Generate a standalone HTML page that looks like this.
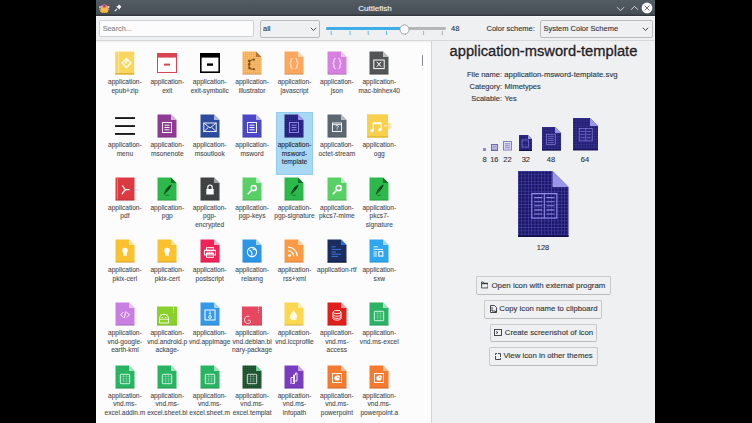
<!DOCTYPE html>
<html><head><meta charset="utf-8"><style>
*{margin:0;padding:0;box-sizing:border-box}
html,body{width:752px;height:423px;overflow:hidden;background:#000;font-family:"Liberation Sans", sans-serif;}
.abs{position:absolute;display:block}
.input{position:absolute;background:#fcfcfc;border:1px solid #c8cacc;border-radius:2px}
.combo{position:absolute;background:#eff0f1;border:1px solid #b9bbbd;border-radius:2px}
.lbl{position:absolute;font-size:7.5px;color:#31363b;line-height:10px;white-space:nowrap;-webkit-text-stroke:0.12px currentColor}
.cell{position:absolute;width:42.4px;height:62px;text-align:center}
.ic{position:absolute;left:9.2px;top:0;width:24px;height:24px}
.ic svg{display:block}
.lab{position:absolute;left:-6px;width:54.4px;top:27.0px;font-size:6.6px;line-height:8.75px;color:#464b50;white-space:nowrap;-webkit-text-stroke:0.08px currentColor}
.sel .lab{color:#1d2125}
.btn{position:absolute;height:18px;background:#eff0f1;border:1px solid #c6c8ca;border-bottom-color:#b9bbbd;border-radius:2px}
</style></head><body>
<div class="abs" style="left:96px;top:0;width:559px;height:423px;background:#eff0f1"></div>
<!-- titlebar -->
<div class="abs" style="left:96px;top:0;width:559px;height:16px;background:linear-gradient(#545c63,#475056 85%,#2c3237)"></div>
<div class="abs" style="left:96px;top:16px;width:559px;height:1px;background:#f7f8f8"></div>
<div class="lbl" style="left:300px;width:150px;text-align:center;top:3.6px;font-size:8px;line-height:10px;color:#f4f5f6">Cuttlefish</div>
<svg class="abs" style="left:99px;top:2.5px" width="10.5" height="10.5" viewBox="0 0 10.5 10.5"><circle cx="1" cy="4" r="0.9" fill="#e6dcf5"/><circle cx="0.9" cy="6.2" r="0.8" fill="#b9a2e6"/><circle cx="9.5" cy="4" r="0.9" fill="#f3eefa"/><circle cx="9.6" cy="6.2" r="0.8" fill="#c9b2ee"/><path d="M1.8 4.2C1.8 1 8.7 1 8.7 4.2L9.3 8.6C8.9 9.6 8 9.2 7.4 10c-0.6-0.7-1.3-0.7-2.1 0-0.8-0.7-1.5-0.7-2.1 0C2.6 9.2 1.6 9.6 1.2 8.6Z" fill="#fbb83a"/><path d="M3 2.2C4 0.8 6.6 0.8 7.4 2.2 7 3.8 6 4.8 5 5.3 4 4.6 3.3 3.6 3 2.2Z" fill="#d25aa8" opacity="0.9"/><circle cx="5.4" cy="3" r="1.1" fill="#b0308a"/></svg>
<svg class="abs" style="left:113.5px;top:4px" width="8" height="8" viewBox="0 0 8 8"><path d="M4.6 0.9C5.3 0.2 7.8 2.7 7.1 3.4L5.9 4.3 5.6 5.8 2.2 2.4 3.7 2.1Z" fill="#f2f3f4"/><path d="M3.2 4.8L0.8 7.2" stroke="#e6e8ea" stroke-width="1.2"/></svg>
<svg class="abs" style="left:616px;top:5.6px" width="9" height="6" viewBox="0 0 9 6"><path d="M1 1.2l3.5 3.5 3.5-3.5" fill="none" stroke="#d5d8da" stroke-width="1"/></svg>
<svg class="abs" style="left:629.5px;top:4.6px" width="9" height="6" viewBox="0 0 9 6"><path d="M1 4.8l3.5-3.5 3.5 3.5" fill="none" stroke="#d5d8da" stroke-width="1"/></svg>
<svg class="abs" style="left:641px;top:2.2px" width="12" height="12" viewBox="0 0 12 12"><circle cx="6" cy="6" r="5.4" fill="#fcfcfc"/><path d="M3.7 3.7l4.6 4.6M8.3 3.7l-4.6 4.6" stroke="#475057" stroke-width="0.8"/></svg>

<!-- toolbar -->
<div class="input" style="left:99px;top:20px;width:155px;height:17px;border-color:#d0d2d4"></div>
<div class="lbl" style="left:102.7px;top:24.2px;color:#85898d;font-size:7.3px">Search...</div>
<div class="combo" style="left:260px;top:20px;width:60px;height:17.5px"></div>
<div class="lbl" style="left:263px;top:24px">all</div>
<svg class="abs" style="left:310px;top:26.5px" width="7" height="5" viewBox="0 0 7 5"><path d="M0.8 0.8l2.7 2.7 2.7-2.7" fill="none" stroke="#31363b" stroke-width="0.9"/></svg>
<div class="abs" style="left:326px;top:26.8px;width:120px;height:3px;border-radius:1.5px;background:#b4b6b8"></div>
<div class="abs" style="left:326px;top:26.8px;width:79px;height:3px;border-radius:1.5px;background:#3daee9"></div>
<svg class="abs" style="left:326.7px;top:30px" width="120" height="6" viewBox="0 0 120 6"><g stroke-width="0.8"><path d="M4.2 1v4M23.1 1v4M41.2 1v4M59.5 1v4M78.5 1v4" stroke="#3daee9"/><path d="M96.6 1v4M115.3 1v4" stroke="#9a9ea2"/></g></svg>
<svg class="abs" style="left:399px;top:23.5px" width="11" height="11" viewBox="0 0 11 11"><circle cx="5.5" cy="5.5" r="4.6" fill="#fcfcfc" stroke="#989b9e" stroke-width="0.9"/></svg>
<div class="lbl" style="left:451px;top:24px">48</div>
<div class="lbl" style="left:486.5px;top:24px">Color scheme:</div>
<div class="combo" style="left:540px;top:20px;width:112.5px;height:17.5px"></div>
<div class="lbl" style="left:543.5px;top:24px">System Color Scheme</div>
<svg class="abs" style="left:642px;top:26.5px" width="7" height="5" viewBox="0 0 7 5"><path d="M0.8 0.8l2.7 2.7 2.7-2.7" fill="none" stroke="#31363b" stroke-width="0.9"/></svg>
<div class="abs" style="left:96px;top:40px;width:559px;height:1px;background:#d6d8da"></div>

<!-- left pane -->
<div class="abs" style="left:96px;top:41px;width:335px;height:382px;background:#fcfcfc"></div>
<div class="abs" style="left:96px;top:41px;width:335px;height:2px;background:linear-gradient(rgba(0,0,0,0.05),rgba(0,0,0,0))"></div>
<div class="abs" style="left:275.5px;top:112.3px;width:37.4px;height:62.4px;background:#a8d8f4;border:1px solid #93ccef"></div>
<div class="cell" style="left:103.70px;top:51.10px"><div class="ic"><svg width="24" height="24" viewBox="0 0 24 24"><rect x="2.2" y="0.6" width="19" height="22.9" fill="#f9d65e"/><rect x="2.2" y="22.3" width="19" height="1.2" fill="#d8a52a"/><rect x="5.2" y="0.6" width="0.8" height="21.7" fill="#fbe9a6"/><path d="M15.3 9.3L13.5 7.5 9 12l4.5 4.5 4.5-4.5-3-3-2.6 2.6 1.1 1.1" fill="none" stroke="#fff" stroke-width="1.25"/></svg></div><div class="lab">application-<br>epub+zip</div></div><div class="cell" style="left:146.10px;top:51.10px"><div class="ic"><svg width="24" height="24" viewBox="0 0 24 24"><rect x="2.5" y="2.5" width="19" height="19" fill="#fff" stroke="#da4453"/><rect x="2" y="2" width="20" height="4.6" fill="#da4453"/><rect x="9" y="12.6" width="6" height="2" fill="#da4453"/></svg></div><div class="lab">application-<br>exit</div></div><div class="cell" style="left:188.50px;top:51.10px"><div class="ic"><svg width="24" height="24" viewBox="0 0 24 24"><rect x="2.8" y="2.8" width="18.4" height="18.4" fill="#fff" stroke="#000" stroke-width="1.6"/><rect x="2" y="2" width="20" height="4.6" fill="#000"/><rect x="9" y="12.4" width="6" height="2.4" fill="#000"/></svg></div><div class="lab">application-<br>exit-symbolic</div></div><div class="cell" style="left:230.90px;top:51.10px"><div class="ic"><svg width="24" height="24" viewBox="0 0 24 24"><defs><pattern id="ptil" width="2" height="2" patternUnits="userSpaceOnUse"><rect width="2" height="2" fill="#f8a947"/><path d="M0 0.25H2M0.25 0V2" stroke="#fbc98a" stroke-width="0.5"/></pattern></defs><path d="M2.5 0.5H16L21.5 6V23.5H2.5Z" fill="url(#ptil)"/><path d="M16 0.5L21.5 6H16Z" fill="#b07a3c"/><rect x="2.5" y="22.6" width="19" height="0.9" fill="rgba(0,0,0,0.18)"/><path d="M14 8.6C11 8.6 9.5 9.5 9.2 12.5S9 16 9.5 17.2 11.5 18 14 18.2" fill="none" stroke="#7a4a16" stroke-width="1"/><g fill="#7a4a16"><rect x="8.2" y="8.8" width="2.2" height="2.2"/><rect x="8.2" y="12.2" width="2.2" height="2.4"/><rect x="8.4" y="16" width="2.2" height="2.2"/><rect x="13" y="7.7" width="1.8" height="1.8"/><rect x="13" y="17.3" width="1.8" height="1.8"/></g></svg></div><div class="lab">application-<br>illustrator</div></div><div class="cell" style="left:273.30px;top:51.10px"><div class="ic"><svg width="24" height="24" viewBox="0 0 24 24"><path d="M2.5 0.5H16L21.5 6V23.5H2.5Z" fill="#fca65e"/><path d="M16 0.5L21.5 6H16Z" fill="#fdd8b6"/><rect x="2.5" y="22.6" width="19" height="0.9" fill="rgba(0,0,0,0.18)"/><path d="M10.5 7.5c-1.5 0-1.5 1-1.5 2.5s-0.3 2-1.3 2.5c1 0.5 1.3 1 1.3 2.5s0 2.5 1.5 2.5M13.5 7.5c1.5 0 1.5 1 1.5 2.5s0.3 2 1.3 2.5c-1 0.5-1.3 1-1.3 2.5s0 2.5-1.5 2.5" fill="none" stroke="#fff" stroke-width="0.9"/></svg></div><div class="lab">application-<br>javascript</div></div><div class="cell" style="left:315.70px;top:51.10px"><div class="ic"><svg width="24" height="24" viewBox="0 0 24 24"><path d="M2.5 0.5H16L21.5 6V23.5H2.5Z" fill="#d680df"/><path d="M16 0.5L21.5 6H16Z" fill="#efc6f3"/><rect x="2.5" y="22.6" width="19" height="0.9" fill="rgba(0,0,0,0.18)"/><path d="M10.5 7.5c-1.5 0-1.5 1-1.5 2.5s-0.3 2-1.3 2.5c1 0.5 1.3 1 1.3 2.5s0 2.5 1.5 2.5M13.5 7.5c1.5 0 1.5 1 1.5 2.5s0.3 2 1.3 2.5c-1 0.5-1.3 1-1.3 2.5s0 2.5-1.5 2.5" fill="none" stroke="#fff" stroke-width="0.9"/></svg></div><div class="lab">application-<br>json</div></div><div class="cell" style="left:358.10px;top:51.10px"><div class="ic"><svg width="24" height="24" viewBox="0 0 24 24"><path d="M2.5 0.5H16L21.5 6V23.5H2.5Z" fill="#535556"/><path d="M16 0.5L21.5 6H16Z" fill="#bfc1c2"/><rect x="2.5" y="22.6" width="19" height="0.9" fill="rgba(0,0,0,0.18)"/><rect x="6.8" y="9" width="10.4" height="8.6" fill="none" stroke="#fff" stroke-width="1"/><path d="M9.8 10.8l4.4 5M14.2 10.8l-4.4 5" stroke="#fff" stroke-width="1"/></svg></div><div class="lab">application-<br>mac-binhex40</div></div><div class="cell" style="left:103.70px;top:113.80px"><div class="ic"><svg width="24" height="24" viewBox="0 0 24 24"><rect x="2" y="3.2" width="20" height="1.7" fill="#000"/><rect x="2" y="11.2" width="20" height="1.7" fill="#000"/><rect x="2" y="19.1" width="20" height="1.7" fill="#000"/></svg></div><div class="lab">application-<br>menu</div></div><div class="cell" style="left:146.10px;top:113.80px"><div class="ic"><svg width="24" height="24" viewBox="0 0 24 24"><path d="M2.5 0.5H16L21.5 6V23.5H2.5Z" fill="#8f3a95"/><path d="M16 0.5L21.5 6H16Z" fill="#d9b3dc"/><rect x="2.5" y="22.6" width="19" height="0.9" fill="rgba(0,0,0,0.18)"/><g fill="none" stroke="#ffffff" stroke-width="1" opacity="0.95"><rect x="7.5" y="8.5" width="9" height="10"/><path d="M9.5 11.2h5M9.5 13.5h5M9.5 15.8h5"/></g></svg></div><div class="lab">application-<br>msonenote</div></div><div class="cell" style="left:188.50px;top:113.80px"><div class="ic"><svg width="24" height="24" viewBox="0 0 24 24"><path d="M2.5 0.5H16L21.5 6V23.5H2.5Z" fill="#2d4c9f"/><path d="M16 0.5L21.5 6H16Z" fill="#aab8de"/><rect x="2.5" y="22.6" width="19" height="0.9" fill="rgba(0,0,0,0.18)"/><g fill="none" stroke="#fff" stroke-width="0.9"><rect x="5.8" y="9" width="12.4" height="8.6"/><path d="M5.8 9l6.2 5 6.2-5M5.8 17.6l4.5-4.2M18.2 17.6l-4.5-4.2"/></g></svg></div><div class="lab">application-<br>msoutlook</div></div><div class="cell" style="left:230.90px;top:113.80px"><div class="ic"><svg width="24" height="24" viewBox="0 0 24 24"><path d="M2.5 0.5H16L21.5 6V23.5H2.5Z" fill="#4b47c8"/><path d="M16 0.5L21.5 6H16Z" fill="#b5b3ed"/><rect x="2.5" y="22.6" width="19" height="0.9" fill="rgba(0,0,0,0.18)"/><g fill="none" stroke="#ffffff" stroke-width="1" opacity="0.95"><rect x="7.5" y="8.5" width="9" height="10"/><path d="M9.5 11.2h5M9.5 13.5h5M9.5 15.8h5"/></g></svg></div><div class="lab">application-<br>msword</div></div><div class="cell sel" style="left:273.30px;top:113.80px"><div class="ic"><svg width="24" height="24" viewBox="0 0 24 24"><defs><pattern id="pttp" width="2" height="2" patternUnits="userSpaceOnUse"><rect width="2" height="2" fill="#221c74"/><path d="M0 0.25H2M0.25 0V2" stroke="#3b36a2" stroke-width="0.5"/></pattern></defs><path d="M2.5 0.5H16L21.5 6V23.5H2.5Z" fill="url(#pttp)"/><path d="M16 0.5L21.5 6H16Z" fill="#9692ea"/><rect x="2.5" y="22.6" width="19" height="0.9" fill="rgba(0,0,0,0.18)"/><g fill="none" stroke="#8f8be6" stroke-width="1" opacity="0.95"><rect x="7.5" y="8.5" width="9" height="10"/><path d="M9.5 11.2h5M9.5 13.5h5M9.5 15.8h5"/></g></svg></div><div class="lab">application-<br>msword-<br>template</div></div><div class="cell" style="left:315.70px;top:113.80px"><div class="ic"><svg width="24" height="24" viewBox="0 0 24 24"><path d="M2.5 0.5H16L21.5 6V23.5H2.5Z" fill="#5c6772"/><path d="M16 0.5L21.5 6H16Z" fill="#b7bdc3"/><rect x="2.5" y="22.6" width="19" height="0.9" fill="rgba(0,0,0,0.18)"/><rect x="7.5" y="9" width="9" height="8.5" fill="none" stroke="#fff" stroke-width="0.9"/><path d="M7.5 10.6h9" stroke="#fff" stroke-width="0.9"/><path d="M10.8 12.5c0-1.2 2.6-1.2 2.6 0s-1.3 0.9-1.3 2M12.1 15.4v0.9" fill="none" stroke="#fff" stroke-width="0.8"/></svg></div><div class="lab">application-<br>octet-stream</div></div><div class="cell" style="left:358.10px;top:113.80px"><div class="ic"><svg width="24" height="24" viewBox="0 0 24 24" style="overflow:visible"><circle cx="21" cy="12" r="3.6" fill="#f8e7a8"/><rect x="0" y="0.3" width="21" height="23.2" fill="#f8d04c"/><rect x="0" y="22.4" width="21" height="1.1" fill="#d9ae2e"/><path d="M6.2 16.9V9.3H14.2V15.9" fill="none" stroke="#fff" stroke-width="1.1"/><path d="M6.2 9.3H14.2" stroke="#fff" stroke-width="1.8"/><circle cx="5" cy="16.8" r="1.7" fill="#fff"/><circle cx="13" cy="15.8" r="1.7" fill="#fff"/><path d="M17 11.8h3" stroke="#fff" stroke-width="1.1" opacity="0.9"/></svg></div><div class="lab">application-<br>ogg</div></div><div class="cell" style="left:103.70px;top:176.50px"><div class="ic"><svg width="24" height="24" viewBox="0 0 24 24"><rect x="2.5" y="0.5" width="19" height="23" fill="#dc3a40"/><rect x="2.5" y="22.6" width="19" height="0.9" fill="rgba(0,0,0,0.2)"/><rect x="4.2" y="0.5" width="0.7" height="22" fill="#f09498"/><path d="M9.5 8.5c1 2 1.5 3 3 4.2M12.5 12.7h4M12.5 12.7c-1.5 1-2.5 2.5-3.5 4.5" fill="none" stroke="#fff" stroke-width="1.3"/></svg></div><div class="lab">application-<br>pdf</div></div><div class="cell" style="left:146.10px;top:176.50px"><div class="ic"><svg width="24" height="24" viewBox="0 0 24 24"><path d="M2.5 0.5H16L21.5 6V23.5H2.5Z" fill="#2db84b"/><path d="M16 0.5L21.5 6H16Z" fill="#1b6d2d"/><rect x="2.5" y="22.6" width="19" height="0.9" fill="rgba(0,0,0,0.18)"/><path d="M16.5 7.5c-3 1-6 4.5-7.8 9.5l0.9 0.5c2-2.5 3.5-3.5 5-5.5 1.2-1.6 1.9-3.2 1.9-4.5z" fill="#0d3f18"/><path d="M9 17.2l3.5-5" stroke="#2db84b" stroke-width="0.4"/><path d="M10.5 18.6c0.6-0.8 1.1 0.3 1.7-0.3s0.8 0.6 1.6 0.1" fill="none" stroke="#0d3f18" stroke-width="0.6"/></svg></div><div class="lab">application-<br>pgp</div></div><div class="cell" style="left:188.50px;top:176.50px"><div class="ic"><svg width="24" height="24" viewBox="0 0 24 24"><defs><pattern id="ptlk" width="2" height="2" patternUnits="userSpaceOnUse"><rect width="2" height="2" fill="#3d3e3f"/><path d="M0 0.25H2M0.25 0V2" stroke="#4a4b4c" stroke-width="0.5"/></pattern></defs><path d="M2.5 0.5H16L21.5 6V23.5H2.5Z" fill="url(#ptlk)"/><path d="M16 0.5L21.5 6H16Z" fill="#a3a5a6"/><rect x="2.5" y="22.6" width="19" height="0.9" fill="rgba(0,0,0,0.18)"/><rect x="8.3" y="12" width="7.4" height="5.5" fill="#fff"/><path d="M9.8 12v-1.8a2.2 2.2 0 0 1 4.4 0V12" fill="none" stroke="#fff" stroke-width="1.2"/></svg></div><div class="lab">application-<br>pgp-<br>encrypted</div></div><div class="cell" style="left:230.90px;top:176.50px"><div class="ic"><svg width="24" height="24" viewBox="0 0 24 24"><path d="M2.5 0.5H16L21.5 6V23.5H2.5Z" fill="#58d066"/><path d="M16 0.5L21.5 6H16Z" fill="#b6eebd"/><rect x="2.5" y="22.6" width="19" height="0.9" fill="rgba(0,0,0,0.18)"/><circle cx="13.8" cy="11" r="2.6" fill="none" stroke="#fff" stroke-width="1.5"/><path d="M12 12.8l-4.2 4.4" stroke="#fff" stroke-width="1.6"/></svg></div><div class="lab">application-<br>pgp-keys</div></div><div class="cell" style="left:273.30px;top:176.50px"><div class="ic"><svg width="24" height="24" viewBox="0 0 24 24"><path d="M2.5 0.5H16L21.5 6V23.5H2.5Z" fill="#2db84b"/><path d="M16 0.5L21.5 6H16Z" fill="#1b6d2d"/><rect x="2.5" y="22.6" width="19" height="0.9" fill="rgba(0,0,0,0.18)"/><path d="M16.5 7.5c-3 1-6 4.5-7.8 9.5l0.9 0.5c2-2.5 3.5-3.5 5-5.5 1.2-1.6 1.9-3.2 1.9-4.5z" fill="#0d3f18"/><path d="M9 17.2l3.5-5" stroke="#2db84b" stroke-width="0.4"/><path d="M10.5 18.6c0.6-0.8 1.1 0.3 1.7-0.3s0.8 0.6 1.6 0.1" fill="none" stroke="#0d3f18" stroke-width="0.6"/></svg></div><div class="lab">application-<br>pgp-signature</div></div><div class="cell" style="left:315.70px;top:176.50px"><div class="ic"><svg width="24" height="24" viewBox="0 0 24 24"><path d="M2.5 0.5H16L21.5 6V23.5H2.5Z" fill="#58d066"/><path d="M16 0.5L21.5 6H16Z" fill="#b6eebd"/><rect x="2.5" y="22.6" width="19" height="0.9" fill="rgba(0,0,0,0.18)"/><circle cx="13.8" cy="11" r="2.6" fill="none" stroke="#fff" stroke-width="1.5"/><path d="M12 12.8l-4.2 4.4" stroke="#fff" stroke-width="1.6"/></svg></div><div class="lab">application-<br>pkcs7-mime</div></div><div class="cell" style="left:358.10px;top:176.50px"><div class="ic"><svg width="24" height="24" viewBox="0 0 24 24"><path d="M2.5 0.5H16L21.5 6V23.5H2.5Z" fill="#2db84b"/><path d="M16 0.5L21.5 6H16Z" fill="#1b6d2d"/><rect x="2.5" y="22.6" width="19" height="0.9" fill="rgba(0,0,0,0.18)"/><path d="M16.5 7.5c-3 1-6 4.5-7.8 9.5l0.9 0.5c2-2.5 3.5-3.5 5-5.5 1.2-1.6 1.9-3.2 1.9-4.5z" fill="#0d3f18"/><path d="M9 17.2l3.5-5" stroke="#2db84b" stroke-width="0.4"/><path d="M10.5 18.6c0.6-0.8 1.1 0.3 1.7-0.3s0.8 0.6 1.6 0.1" fill="none" stroke="#0d3f18" stroke-width="0.6"/></svg></div><div class="lab">application-<br>pkcs7-<br>signature</div></div><div class="cell" style="left:103.70px;top:239.20px"><div class="ic"><svg width="24" height="24" viewBox="0 0 24 24"><path d="M2.5 0.5H16L21.5 6V23.5H2.5Z" fill="#fcc12f"/><path d="M16 0.5L21.5 6H16Z" fill="#fde7a4"/><rect x="2.5" y="22.6" width="19" height="0.9" fill="rgba(0,0,0,0.18)"/><circle cx="12" cy="11.5" r="2.8" fill="#fff"/><path d="M10.3 13v4.5l1.7-1.2 1.7 1.2v-4.5" fill="#fff"/></svg></div><div class="lab">application-<br>pkix-cerl</div></div><div class="cell" style="left:146.10px;top:239.20px"><div class="ic"><svg width="24" height="24" viewBox="0 0 24 24"><path d="M2.5 0.5H16L21.5 6V23.5H2.5Z" fill="#fcc12f"/><path d="M16 0.5L21.5 6H16Z" fill="#fde7a4"/><rect x="2.5" y="22.6" width="19" height="0.9" fill="rgba(0,0,0,0.18)"/><circle cx="12" cy="11.5" r="2.8" fill="#fff"/><path d="M10.3 13v4.5l1.7-1.2 1.7 1.2v-4.5" fill="#fff"/></svg></div><div class="lab">application-<br>pkix-cert</div></div><div class="cell" style="left:188.50px;top:239.20px"><div class="ic"><svg width="24" height="24" viewBox="0 0 24 24"><path d="M2.5 0.5H16L21.5 6V23.5H2.5Z" fill="#ef2358"/><path d="M16 0.5L21.5 6H16Z" fill="#f9b6c8"/><rect x="2.5" y="22.6" width="19" height="0.9" fill="rgba(0,0,0,0.18)"/><g fill="none" stroke="#fff" stroke-width="1"><rect x="8.5" y="8.7" width="7" height="2.6"/><rect x="6.5" y="11.3" width="11" height="4.6"/><rect x="8.5" y="14.5" width="7" height="3.8"/></g><path d="M8.5 13.2h7" stroke="#fff" stroke-width="0.8"/></svg></div><div class="lab">application-<br>postscript</div></div><div class="cell" style="left:230.90px;top:239.20px"><div class="ic"><svg width="24" height="24" viewBox="0 0 24 24"><path d="M2.5 0.5H16L21.5 6V23.5H2.5Z" fill="#2d95e6"/><path d="M16 0.5L21.5 6H16Z" fill="#abd5f5"/><rect x="2.5" y="22.6" width="19" height="0.9" fill="rgba(0,0,0,0.18)"/><circle cx="12" cy="13" r="4.6" fill="none" stroke="#fff" stroke-width="1.1"/><path d="M9 11.5c1-0.2 2 0.3 2.2 1.2s1 0.8 0.8 2l-0.5 2M12.8 9.2c0 1 0.8 1.4 1.6 1.2s1 0.6 1.4 1" fill="none" stroke="#fff" stroke-width="1.1"/></svg></div><div class="lab">application-<br>relaxng</div></div><div class="cell" style="left:273.30px;top:239.20px"><div class="ic"><svg width="24" height="24" viewBox="0 0 24 24"><path d="M2.5 0.5H16L21.5 6V23.5H2.5Z" fill="#fb9a45"/><path d="M16 0.5L21.5 6H16Z" fill="#fdd0a8"/><rect x="2.5" y="22.6" width="19" height="0.9" fill="rgba(0,0,0,0.18)"/><circle cx="7.5" cy="16.6" r="1.4" fill="#fff"/><path d="M6.2 11.8a5.4 5.4 0 0 1 5.4 5.4M6.2 8.2a9 9 0 0 1 9 9" fill="none" stroke="#fff" stroke-width="1.3"/></svg></div><div class="lab">application-<br>rss+xml</div></div><div class="cell" style="left:315.70px;top:239.20px"><div class="ic"><svg width="24" height="24" viewBox="0 0 24 24"><path d="M2.5 0.5H16L21.5 6V23.5H2.5Z" fill="#1b2c5f"/><path d="M16 0.5L21.5 6H16Z" fill="#2d6ff2"/><rect x="2.5" y="22.6" width="19" height="0.9" fill="#0d1633"/><path d="M6.5 7.8h4M6.5 10.4h9.5M6.5 13h4.5M6.5 15.2h9.5M6.5 17.4h6.5" stroke="#3d7fe6" stroke-width="0.9"/></svg></div><div class="lab">application-rtf</div></div><div class="cell" style="left:358.10px;top:239.20px"><div class="ic"><svg width="24" height="24" viewBox="0 0 24 24"><path d="M2.5 0.5H16L21.5 6V23.5H2.5Z" fill="#2ea7f0"/><path d="M16 0.5L21.5 6H16Z" fill="#aadcf8"/><rect x="2.5" y="22.6" width="19" height="0.9" fill="rgba(0,0,0,0.18)"/><g stroke="#fff" stroke-width="0.9"><path d="M6.5 7.8h4.5M6.5 10.4h9.5M6.5 13h3.5M6.5 15h3.5M6.5 17h3.5"/></g><rect x="11.8" y="12.6" width="4" height="4.5" fill="none" stroke="#fff" stroke-width="1.1"/></svg></div><div class="lab">application-<br>sxw</div></div><div class="cell" style="left:103.70px;top:301.90px"><div class="ic"><svg width="24" height="24" viewBox="0 0 24 24"><path d="M2.5 0.5H16L21.5 6V23.5H2.5Z" fill="#c97ee2"/><path d="M16 0.5L21.5 6H16Z" fill="#eac6f5"/><rect x="2.5" y="22.6" width="19" height="0.9" fill="rgba(0,0,0,0.18)"/><path d="M10.2 10.2l-2.6 2.6 2.6 2.6M13.8 10.2l2.6 2.6-2.6 2.6M12.8 9.5l-1.6 6.6" fill="none" stroke="#fff" stroke-width="1"/></svg></div><div class="lab">application-<br>vnd-google-<br>earth-kml</div></div><div class="cell" style="left:146.10px;top:301.90px"><div class="ic"><svg width="24" height="24" viewBox="0 0 24 24"><rect x="2" y="4.5" width="20" height="19" fill="#8bd12b"/><rect x="2" y="22.6" width="20" height="0.9" fill="rgba(0,0,0,0.15)"/><path d="M18.5 4.5v6" stroke="#fff" stroke-dasharray="0.9 0.9" stroke-width="0.9" opacity="0.9"/><path d="M4.5 21V16.5a4.5 4.2 0 0 1 9 0V21Z" fill="none" stroke="#fff" stroke-width="0.9"/><path d="M4.5 17.2H13.5" stroke="#fff" stroke-width="0.8"/><path d="M5.5 12.5l1 1.3M12.5 12.5l-1 1.3" stroke="#fff" stroke-width="0.7"/><circle cx="7.2" cy="15.6" r="0.6" fill="#fff"/><circle cx="10.8" cy="15.6" r="0.6" fill="#fff"/></svg></div><div class="lab">application-<br>vnd.android.p<br>ackage-</div></div><div class="cell" style="left:188.50px;top:301.90px"><div class="ic"><svg width="24" height="24" viewBox="0 0 24 24"><path d="M2.5 0.5H16L21.5 6V23.5H2.5Z" fill="#3399e8"/><path d="M16 0.5L21.5 6H16Z" fill="#aad4f5"/><rect x="2.5" y="22.6" width="19" height="0.9" fill="rgba(0,0,0,0.18)"/><rect x="7" y="8" width="10" height="10" fill="none" stroke="#fff" stroke-width="1"/><circle cx="12" cy="15" r="1.4" fill="none" stroke="#fff" stroke-width="0.9"/><path d="M12 9v3.2M10.9 11.2l1.1 1.1 1.1-1.1" fill="none" stroke="#fff" stroke-width="0.8"/></svg></div><div class="lab">application-<br>vnd.appimage</div></div><div class="cell" style="left:230.90px;top:301.90px"><div class="ic"><svg width="24" height="24" viewBox="0 0 24 24"><rect x="2" y="4.5" width="20" height="19" fill="#e6485f"/><rect x="2" y="22.6" width="20" height="0.9" fill="rgba(0,0,0,0.15)"/><path d="M18.5 4.5v6" stroke="#fff" stroke-dasharray="0.9 0.9" stroke-width="0.9" opacity="0.9"/><path d="M9.5 14.5c-2.5-1-5 0.5-5 3.5 0 2.5 2 3.8 4 3.5s2.5-2.2 1.5-3-2-0.3-2 0.5" fill="none" stroke="#fff" stroke-width="0.8"/></svg></div><div class="lab">application-<br>vnd.debian.bi<br>nary-package</div></div><div class="cell" style="left:273.30px;top:301.90px"><div class="ic"><svg width="24" height="24" viewBox="0 0 24 24"><path d="M2.5 0.5H16L21.5 6V23.5H2.5Z" fill="#fcd850"/><path d="M16 0.5L21.5 6H16Z" fill="#fdeeb0"/><rect x="2.5" y="22.6" width="19" height="0.9" fill="rgba(0,0,0,0.18)"/><path d="M11.6 8.1c-0.8 2-3.6 4.6-3.6 6.6a3.6 3.6 0 0 0 7.2 0c0-2-2.8-4.6-3.6-6.6z" fill="#fffbe8"/><path d="M13 16.5a1.5 1.5 0 0 0 1.5-1.5" fill="none" stroke="#f0d060" stroke-width="0.6"/></svg></div><div class="lab">application-<br>vnd.iccprofile</div></div><div class="cell" style="left:315.70px;top:301.90px"><div class="ic"><svg width="24" height="24" viewBox="0 0 24 24"><path d="M2.5 0.5H16L21.5 6V23.5H2.5Z" fill="#e01e1b"/><path d="M16 0.5L21.5 6H16Z" fill="#f3a6a5"/><rect x="2.5" y="22.6" width="19" height="0.9" fill="rgba(0,0,0,0.18)"/><g fill="none" stroke="#fff" stroke-width="0.9"><ellipse cx="12" cy="10" rx="4" ry="1.6"/><path d="M8 10v6.5c0 2.1 8 2.1 8 0V10M8 12.6c0 2.1 8 2.1 8 0M8 14.8c0 2.1 8 2.1 8 0"/></g></svg></div><div class="lab">application-<br>vnd.ms-<br>access</div></div><div class="cell" style="left:358.10px;top:301.90px"><div class="ic"><svg width="24" height="24" viewBox="0 0 24 24"><path d="M2.5 0.5H16L21.5 6V23.5H2.5Z" fill="#29b463"/><path d="M16 0.5L21.5 6H16Z" fill="#a7e1c0"/><rect x="2.5" y="22.6" width="19" height="0.9" fill="rgba(0,0,0,0.18)"/><rect x="7.3" y="9.3" width="9.4" height="9.4" rx="0.8" fill="none" stroke="#fff" stroke-width="0.8"/><path d="M8.5 11.5h7M8.5 13.8h7M8.5 16.1h7M10.5 10.2v7.6M13.5 10.2v7.6" stroke="#fff" stroke-width="0.5" opacity="0.75" stroke-dasharray="0.8 0.5"/></svg></div><div class="lab">application-<br>vnd.ms-excel</div></div><div class="cell" style="left:103.70px;top:364.60px"><div class="ic"><svg width="24" height="24" viewBox="0 0 24 24"><path d="M2.5 0.5H16L21.5 6V23.5H2.5Z" fill="#29b463"/><path d="M16 0.5L21.5 6H16Z" fill="#a7e1c0"/><rect x="2.5" y="22.6" width="19" height="0.9" fill="rgba(0,0,0,0.18)"/><rect x="7.3" y="9.3" width="9.4" height="9.4" rx="0.8" fill="none" stroke="#fff" stroke-width="0.8"/><path d="M8.5 11.5h7M8.5 13.8h7M8.5 16.1h7M10.5 10.2v7.6M13.5 10.2v7.6" stroke="#fff" stroke-width="0.5" opacity="0.75" stroke-dasharray="0.8 0.5"/></svg></div><div class="lab">application-<br>vnd.ms-<br>excel.addin.m</div></div><div class="cell" style="left:146.10px;top:364.60px"><div class="ic"><svg width="24" height="24" viewBox="0 0 24 24"><path d="M2.5 0.5H16L21.5 6V23.5H2.5Z" fill="#29b463"/><path d="M16 0.5L21.5 6H16Z" fill="#a7e1c0"/><rect x="2.5" y="22.6" width="19" height="0.9" fill="rgba(0,0,0,0.18)"/><rect x="7.3" y="9.3" width="9.4" height="9.4" rx="0.8" fill="none" stroke="#fff" stroke-width="0.8"/><path d="M8.5 11.5h7M8.5 13.8h7M8.5 16.1h7M10.5 10.2v7.6M13.5 10.2v7.6" stroke="#fff" stroke-width="0.5" opacity="0.75" stroke-dasharray="0.8 0.5"/></svg></div><div class="lab">application-<br>vnd.ms-<br>excel.sheet.bi</div></div><div class="cell" style="left:188.50px;top:364.60px"><div class="ic"><svg width="24" height="24" viewBox="0 0 24 24"><path d="M2.5 0.5H16L21.5 6V23.5H2.5Z" fill="#29b463"/><path d="M16 0.5L21.5 6H16Z" fill="#a7e1c0"/><rect x="2.5" y="22.6" width="19" height="0.9" fill="rgba(0,0,0,0.18)"/><rect x="7.3" y="9.3" width="9.4" height="9.4" rx="0.8" fill="none" stroke="#fff" stroke-width="0.8"/><path d="M8.5 11.5h7M8.5 13.8h7M8.5 16.1h7M10.5 10.2v7.6M13.5 10.2v7.6" stroke="#fff" stroke-width="0.5" opacity="0.75" stroke-dasharray="0.8 0.5"/></svg></div><div class="lab">application-<br>vnd.ms-<br>excel.sheet.m</div></div><div class="cell" style="left:230.90px;top:364.60px"><div class="ic"><svg width="24" height="24" viewBox="0 0 24 24"><defs><pattern id="ptxt" width="2" height="2" patternUnits="userSpaceOnUse"><rect width="2" height="2" fill="#1b4a2a"/><path d="M0 0.25H2M0.25 0V2" stroke="#2e6b42" stroke-width="0.5"/></pattern></defs><path d="M2.5 0.5H16L21.5 6V23.5H2.5Z" fill="url(#ptxt)"/><path d="M16 0.5L21.5 6H16Z" fill="#74d39c"/><rect x="2.5" y="22.6" width="19" height="0.9" fill="rgba(0,0,0,0.18)"/><rect x="7.3" y="9.3" width="9.4" height="9.4" rx="0.8" fill="none" stroke="#fff" stroke-width="0.8"/><path d="M8.5 11.5h7M8.5 13.8h7M8.5 16.1h7M10.5 10.2v7.6M13.5 10.2v7.6" stroke="#fff" stroke-width="0.5" opacity="0.75" stroke-dasharray="0.8 0.5"/></svg></div><div class="lab">application-<br>vnd.ms-<br>excel.templat</div></div><div class="cell" style="left:273.30px;top:364.60px"><div class="ic"><svg width="24" height="24" viewBox="0 0 24 24"><path d="M2.5 0.5H16L21.5 6V23.5H2.5Z" fill="#7a3cc1"/><path d="M16 0.5L21.5 6H16Z" fill="#c6a6e6"/><rect x="2.5" y="22.6" width="19" height="0.9" fill="rgba(0,0,0,0.18)"/><path d="M9 19V12.5H11.5V10H13.5V8H15V16H12.5V18.5H10.5V19M11.5 12.5V17.5M12.5 10V16" fill="none" stroke="#fff" stroke-width="0.9"/></svg></div><div class="lab">application-<br>vnd.ms-<br>infopath</div></div><div class="cell" style="left:315.70px;top:364.60px"><div class="ic"><svg width="24" height="24" viewBox="0 0 24 24"><path d="M2.5 0.5H16L21.5 6V23.5H2.5Z" fill="#f57a30"/><path d="M16 0.5L21.5 6H16Z" fill="#f9c09d"/><rect x="2.5" y="22.6" width="19" height="0.9" fill="rgba(0,0,0,0.18)"/><g fill="none" stroke="#fff" stroke-width="0.9"><rect x="7.5" y="8.5" width="9" height="9"/></g><circle cx="12" cy="13" r="2.6" fill="#fff"/><path d="M12 10.4V13H14.6A2.6 2.6 0 0 0 12 10.4Z" fill="#f57a30"/><path d="M12.4 10V12.6H15A2.6 2.6 0 0 0 12.4 10Z" fill="#fff"/></svg></div><div class="lab">application-<br>vnd.ms-<br>powerpoint</div></div><div class="cell" style="left:358.10px;top:364.60px"><div class="ic"><svg width="24" height="24" viewBox="0 0 24 24"><path d="M2.5 0.5H16L21.5 6V23.5H2.5Z" fill="#f57a30"/><path d="M16 0.5L21.5 6H16Z" fill="#f9c09d"/><rect x="2.5" y="22.6" width="19" height="0.9" fill="rgba(0,0,0,0.18)"/><g fill="none" stroke="#fff" stroke-width="0.9"><rect x="7.5" y="8.5" width="9" height="9"/></g><circle cx="12" cy="13" r="2.6" fill="#fff"/><path d="M12 10.4V13H14.6A2.6 2.6 0 0 0 12 10.4Z" fill="#f57a30"/><path d="M12.4 10V12.6H15A2.6 2.6 0 0 0 12.4 10Z" fill="#fff"/></svg></div><div class="lab">application-<br>vnd.ms-<br>powerpoint.a</div></div>
<div class="abs" style="left:421.8px;top:55px;width:1.7px;height:10.6px;border-radius:0.8px;background:#85898d"></div>
<div class="abs" style="left:431px;top:41px;width:1px;height:382px;background:#d2d4d6"></div>

<!-- right pane -->
<div class="lbl" style="left:432px;width:223px;text-align:center;top:40.7px;font-size:14.7px;line-height:20px;color:#1f2225;-webkit-text-stroke:0.3px #1f2225">application-msword-template</div>
<div class="lbl" style="left:432px;width:70px;text-align:right;top:70.2px">File name:</div>
<div class="lbl" style="left:504.3px;top:70.2px;font-size:7.75px">application-msword-template.svg</div>
<div class="lbl" style="left:432px;width:70px;text-align:right;top:82.2px">Category:</div>
<div class="lbl" style="left:504.5px;top:82.2px">Mimetypes</div>
<div class="lbl" style="left:432px;width:70px;text-align:right;top:94.2px">Scalable:</div>
<div class="lbl" style="left:504.5px;top:94.2px">Yes</div>
<div class="abs" style="left:482.7px;top:147.6px;width:3.6px;height:3.6px;background:#8c8ac4"></div><svg class="abs" style="left:490.8px;top:143.8px" width="7" height="7" viewBox="0 0 7 7"><rect x="0" y="0" width="7" height="7" fill="#6c6ab4"/><rect x="1" y="1" width="5" height="4.6" fill="#c4c2e8"/><rect x="1.5" y="2" width="4" height="0.7" fill="#8e8cca"/><rect x="1.5" y="3.6" width="4" height="0.7" fill="#8e8cca"/></svg><svg class="abs" style="left:503.4px;top:141px" width="9" height="9.5" viewBox="0 0 9 9.5"><rect x="0" y="0" width="9" height="9.5" fill="#8280c4"/><rect x="1" y="1" width="7" height="7.5" fill="#e4e3f4"/><rect x="1.8" y="2.3" width="5.4" height="1" fill="#8280c4"/><rect x="1.8" y="4.3" width="5.4" height="1" fill="#8280c4"/><rect x="1.8" y="6.3" width="5.4" height="1" fill="#8280c4"/></svg><svg class="abs" style="left:519px;top:135px;overflow:visible" width="13" height="16" viewBox="0 0 13 16"><defs><pattern id="pa" width="1.50" height="1.50" patternUnits="userSpaceOnUse"><rect width="1.50" height="1.50" fill="#1b1667"/><path d="M0 0H1.50M0 0V1.50" stroke="#4440a4" stroke-width="0.63"/></pattern></defs><path d="M0 0H9L13 4V16H0Z" fill="url(#pa)"/><path d="M9 0L13 4H9Z" fill="#9a96ea"/><rect x="0" y="15.00" width="13" height="1.00" fill="#120e4a"/><g fill="none" stroke="#8f8be6" stroke-width="0.60"><rect x="3" y="5" width="6.5" height="7"/></g></svg><svg class="abs" style="left:541.7px;top:126.6px;overflow:visible" width="19" height="23.4" viewBox="0 0 19 23.4"><defs><pattern id="pb" width="1.50" height="1.50" patternUnits="userSpaceOnUse"><rect width="1.50" height="1.50" fill="#1b1667"/><path d="M0 0H1.50M0 0V1.50" stroke="#4440a4" stroke-width="0.63"/></pattern></defs><path d="M0 0H13L19 6V23.4H0Z" fill="url(#pb)"/><path d="M13 0L19 6H13Z" fill="#9a96ea"/><rect x="0" y="22.40" width="19" height="1.00" fill="#120e4a"/><g fill="none" stroke="#8f8be6" stroke-width="0.60"><rect x="4.5" y="7.2" width="8.8" height="10.5"/><path d="M5.82 9.30H11.98M5.82 11.40H11.98M5.82 13.50H11.98M5.82 15.60H11.98"/></g></svg><svg class="abs" style="left:573px;top:117.7px;overflow:visible" width="25" height="32.3" viewBox="0 0 25 32.3"><defs><pattern id="pc" width="1.63" height="1.63" patternUnits="userSpaceOnUse"><rect width="1.63" height="1.63" fill="#1b1667"/><path d="M0 0H1.63M0 0V1.63" stroke="#4440a4" stroke-width="0.69"/></pattern></defs><path d="M0 0H17L25 8V32.3H0Z" fill="url(#pc)"/><path d="M17 0L25 8H17Z" fill="#9a96ea"/><rect x="0" y="31.30" width="25" height="1.00" fill="#120e4a"/><g fill="none" stroke="#8f8be6" stroke-width="0.60"><rect x="6.2" y="10.3" width="13" height="12.6"/><path d="M12.7 10.3V22.9"/><path d="M7.50 13.45H11.66M13.74 13.45H17.90M7.50 16.60H11.66M13.74 16.60H17.90M7.50 19.75H11.66M13.74 19.75H17.90"/></g></svg><svg class="abs" style="left:518px;top:171px;overflow:visible" width="50.5" height="66" viewBox="0 0 50.5 66"><defs><pattern id="pd" width="3.30" height="3.30" patternUnits="userSpaceOnUse"><rect width="3.30" height="3.30" fill="#1b1667"/><path d="M0 0H3.30M0 0V3.30" stroke="#4440a4" stroke-width="1.39"/></pattern></defs><path d="M0 0H34.5L50.5 16V66H0Z" fill="url(#pd)"/><path d="M34.5 0L50.5 16H34.5Z" fill="#9a96ea"/><rect x="0" y="64.35" width="50.5" height="1.65" fill="#120e4a"/><g fill="none" stroke="#8f8be6" stroke-width="1.12"><rect x="13.8" y="22.5" width="25" height="24.6"/><path d="M26.3 22.5V47.1"/><path d="M16.30 26.60H24.30M28.30 26.60H36.30M16.30 30.70H24.30M28.30 30.70H36.30M16.30 34.80H24.30M28.30 34.80H36.30M16.30 38.90H24.30M28.30 38.90H36.30M16.30 43.00H24.30M28.30 43.00H36.30"/></g></svg>
<div class="lbl" style="left:477.5px;width:14px;text-align:center;top:155px">8</div>
<div class="lbl" style="left:487.3px;width:14px;text-align:center;top:155px">16</div>
<div class="lbl" style="left:500.5px;width:14px;text-align:center;top:155px">22</div>
<div class="lbl" style="left:518.8px;width:14px;text-align:center;top:155px">32</div>
<div class="lbl" style="left:544px;width:14px;text-align:center;top:155px">48</div>
<div class="lbl" style="left:578px;width:14px;text-align:center;top:155px">64</div>
<div class="lbl" style="left:528px;width:30px;text-align:center;top:243px">128</div>

<div class="btn" style="left:476px;top:276px;width:135px;height:18.5px"></div>
<div class="btn" style="left:484px;top:300px;width:118px;height:18.5px"></div>
<div class="btn" style="left:490px;top:323.5px;width:107px;height:18.5px"></div>
<div class="btn" style="left:489px;top:347px;width:109px;height:18.5px"></div>
<svg class="abs" style="left:480.6px;top:281.2px" width="7.5" height="7.5" viewBox="0 0 8 8"><path d="M0.6 1V7.4H7.4V2.4H3.5L2.5 1Z" fill="none" stroke="#31363b" stroke-width="0.9"/><rect x="0.6" y="2.2" width="6.8" height="1.2" fill="#31363b"/></svg>
<svg class="abs" style="left:490px;top:305px" width="7" height="8" viewBox="0 0 7 8"><path d="M0.5 0.5H4.5L6.5 2.5V7.5H0.5Z" fill="none" stroke="#31363b" stroke-width="0.9"/><path d="M2 2V6H5" fill="none" stroke="#31363b" stroke-width="0.9"/><path d="M4 7.5L6.5 5V7.5Z" fill="#31363b"/></svg>
<svg class="abs" style="left:494px;top:329px" width="8" height="7" viewBox="0 0 8 7"><rect x="0.5" y="0.5" width="7" height="6" fill="none" stroke="#31363b" stroke-width="0.9"/><path d="M2 2.5L4 3.5L2 4.5" fill="none" stroke="#31363b" stroke-width="0.8"/></svg>
<svg class="abs" style="left:494.5px;top:353px" width="6" height="7" viewBox="0 0 6 7"><path d="M0.5 2V0.5H2M0.5 3V6.5H5.5V5M5.5 4V0.5H3" fill="none" stroke="#31363b" stroke-width="0.9"/></svg>
<div class="lbl" style="left:491.4px;top:280.5px;font-size:7.9px">Open icon with external program</div>
<div class="lbl" style="left:499.3px;top:304px;font-size:7.75px">Copy icon name to clipboard</div>
<div class="lbl" style="left:504.8px;top:327.6px;font-size:7.75px">Create screenshot of icon</div>
<div class="lbl" style="left:503.5px;top:351.2px;font-size:7.8px">View icon in other themes</div>
</body></html>
